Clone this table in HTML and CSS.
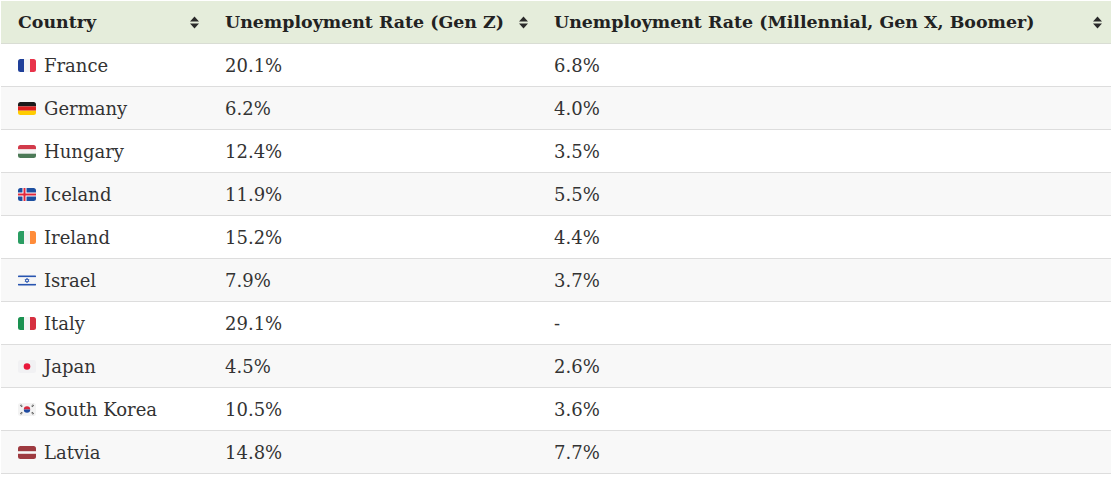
FILE: index.html
```html
<!DOCTYPE html>
<html>
<head>
<meta charset="utf-8">
<link rel="stylesheet" href="styles.css">
</head>
<body>
<table class="data">
  <colgroup><col class="c1"><col class="c2"><col class="c3"></colgroup>
  <thead>
    <tr>
      <th><div class="th"><span>Country</span><svg class="sort" viewBox="0 0 9 13"><path d="M0 5.5 L4.5 0.5 L9 5.5 Z M0 7.5 L9 7.5 L4.5 12.5 Z"/></svg></div></th>
      <th><div class="th"><span>Unemployment Rate (Gen Z)</span><svg class="sort" viewBox="0 0 9 13"><path d="M0 5.5 L4.5 0.5 L9 5.5 Z M0 7.5 L9 7.5 L4.5 12.5 Z"/></svg></div></th>
      <th><div class="th"><span>Unemployment Rate (Millennial, Gen X, Boomer)</span><svg class="sort" viewBox="0 0 9 13"><path d="M0 5.5 L4.5 0.5 L9 5.5 Z M0 7.5 L9 7.5 L4.5 12.5 Z"/></svg></div></th>
    </tr>
  </thead>
  <tbody>
    <tr>
      <td><div class="country"><svg class="flag" viewBox="0 0 18 13"><defs><clipPath id="r1"><rect width="18" height="13" rx="2.5"/></clipPath></defs><g clip-path="url(#r1)"><rect width="6" height="13" fill="#1f3f99"/><rect x="6" width="6" height="13" fill="#f4f4f4"/><rect x="12" width="6" height="13" fill="#e8334a"/></g></svg>France</div></td>
      <td>20.1%</td><td>6.8%</td>
    </tr>
    <tr>
      <td><div class="country"><svg class="flag" viewBox="0 0 18 13"><defs><clipPath id="r2"><rect width="18" height="13" rx="2.5"/></clipPath></defs><g clip-path="url(#r2)"><rect width="18" height="4.4" fill="#1a1a1a"/><rect y="4.4" width="18" height="4.3" fill="#dd1f1f"/><rect y="8.7" width="18" height="4.3" fill="#ffcc00"/></g></svg>Germany</div></td>
      <td>6.2%</td><td>4.0%</td>
    </tr>
    <tr>
      <td><div class="country"><svg class="flag" viewBox="0 0 18 13"><defs><clipPath id="r3"><rect width="18" height="13" rx="2.5"/></clipPath></defs><g clip-path="url(#r3)"><rect width="18" height="4.4" fill="#d23a4a"/><rect y="4.4" width="18" height="4.3" fill="#f4f4f4"/><rect y="8.7" width="18" height="4.3" fill="#4c7a57"/></g></svg>Hungary</div></td>
      <td>12.4%</td><td>3.5%</td>
    </tr>
    <tr>
      <td><div class="country"><svg class="flag" viewBox="0 0 18 13"><defs><clipPath id="r4"><rect width="18" height="13" rx="2.5"/></clipPath></defs><g clip-path="url(#r4)"><rect width="18" height="13" fill="#1d4fa0"/><rect x="4.5" width="4" height="13" fill="#fff"/><rect y="4.5" width="18" height="4" fill="#fff"/><rect x="5.5" width="2" height="13" fill="#e0283c"/><rect y="5.5" width="18" height="2" fill="#e0283c"/></g></svg>Iceland</div></td>
      <td>11.9%</td><td>5.5%</td>
    </tr>
    <tr>
      <td><div class="country"><svg class="flag" viewBox="0 0 18 13"><defs><clipPath id="r5"><rect width="18" height="13" rx="2.5"/></clipPath></defs><g clip-path="url(#r5)"><rect width="6" height="13" fill="#2a9d62"/><rect x="6" width="6" height="13" fill="#f4f4f4"/><rect x="12" width="6" height="13" fill="#ff8c3a"/></g></svg>Ireland</div></td>
      <td>15.2%</td><td>4.4%</td>
    </tr>
    <tr>
      <td><div class="country"><svg class="flag" viewBox="0 0 18 13"><defs><clipPath id="r6"><rect width="18" height="13" rx="2.5"/></clipPath></defs><g clip-path="url(#r6)"><rect width="18" height="13" fill="#f6f6f6"/><rect y="1.5" width="18" height="1.6" fill="#2855b0"/><rect y="9.9" width="18" height="1.6" fill="#2855b0"/><path d="M9 4 L11 7.5 L7 7.5 Z M9 9 L7 5.5 L11 5.5 Z" fill="none" stroke="#2855b0" stroke-width="0.7"/></g></svg>Israel</div></td>
      <td>7.9%</td><td>3.7%</td>
    </tr>
    <tr>
      <td><div class="country"><svg class="flag" viewBox="0 0 18 13"><defs><clipPath id="r7"><rect width="18" height="13" rx="2.5"/></clipPath></defs><g clip-path="url(#r7)"><rect width="6" height="13" fill="#1a9150"/><rect x="6" width="6" height="13" fill="#f4f4f4"/><rect x="12" width="6" height="13" fill="#d63040"/></g></svg>Italy</div></td>
      <td>29.1%</td><td>-</td>
    </tr>
    <tr>
      <td><div class="country"><svg class="flag" viewBox="0 0 18 13"><defs><clipPath id="r8"><rect width="18" height="13" rx="2.5"/></clipPath></defs><g clip-path="url(#r8)"><rect width="18" height="13" fill="#f1f1f3"/><circle cx="9" cy="6.5" r="3.3" fill="#e8163a"/></g></svg>Japan</div></td>
      <td>4.5%</td><td>2.6%</td>
    </tr>
    <tr>
      <td><div class="country"><svg class="flag" viewBox="0 0 18 13"><defs><clipPath id="r9"><rect width="18" height="13" rx="2.5"/></clipPath></defs><g clip-path="url(#r9)"><rect width="18" height="13" fill="#f3f3f3"/><path d="M5.8 6.5 A3.2 3.2 0 0 1 12.2 6.5 Z" fill="#d8283d"/><path d="M5.8 6.5 A3.2 3.2 0 0 0 12.2 6.5 Z" fill="#1f4aa0"/><g stroke="#555" stroke-width="0.9"><path d="M2 2.2 L4 4 M2.8 1.5 L4.6 3.2"/><path d="M14 4 L16 2.2 M13.4 3.2 L15.2 1.5"/><path d="M2 10.8 L4 9 M2.8 11.5 L4.6 9.8"/><path d="M14 9 L16 10.8 M13.4 9.8 L15.2 11.5"/></g></g></svg>South Korea</div></td>
      <td>10.5%</td><td>3.6%</td>
    </tr>
    <tr>
      <td><div class="country"><svg class="flag" viewBox="0 0 18 13"><defs><clipPath id="r10"><rect width="18" height="13" rx="2.5"/></clipPath></defs><g clip-path="url(#r10)"><rect width="18" height="13" fill="#9e3a40"/><rect y="5.2" width="18" height="2.6" fill="#f6f6f6"/></g></svg>Latvia</div></td>
      <td>14.8%</td><td>7.7%</td>
    </tr>
  </tbody>
</table>
</body>
</html>
```
FILE: styles.css
```css
html, body {
  margin: 0;
  padding: 0;
  background: #ffffff;
}
body {
  padding: 1px 0 0 1px;
}
.data {
  width: 1110px;
  border-collapse: collapse;
  table-layout: fixed;
  font-family: "DejaVu Serif", "Liberation Serif", serif;
  color: #333333;
}
.c1 { width: 207px; }
.c2 { width: 329px; }
.c3 { width: 574px; }
.data th {
  background: #e5eddb;
  height: 42px;
  padding: 0 9px 0 17px;
  text-align: left;
  font-size: 17.4px;
  font-weight: bold;
  color: #222222;
  border-bottom: 1px solid #d9ddd4;
}
.th {
  display: flex;
  align-items: center;
  justify-content: space-between;
}
.sort {
  width: 9px;
  height: 13px;
  fill: #2a2a2a;
  flex: none;
}
.data td {
  height: 42px;
  padding: 0 17px;
  font-size: 18px;
  border-bottom: 1px solid #dddddd;
}
.data tbody tr:nth-child(even) td {
  background: #f8f8f8;
}
.country {
  display: flex;
  align-items: center;
  gap: 8px;
}
.flag {
  width: 18px;
  height: 13px;
  flex: none;
}
```
